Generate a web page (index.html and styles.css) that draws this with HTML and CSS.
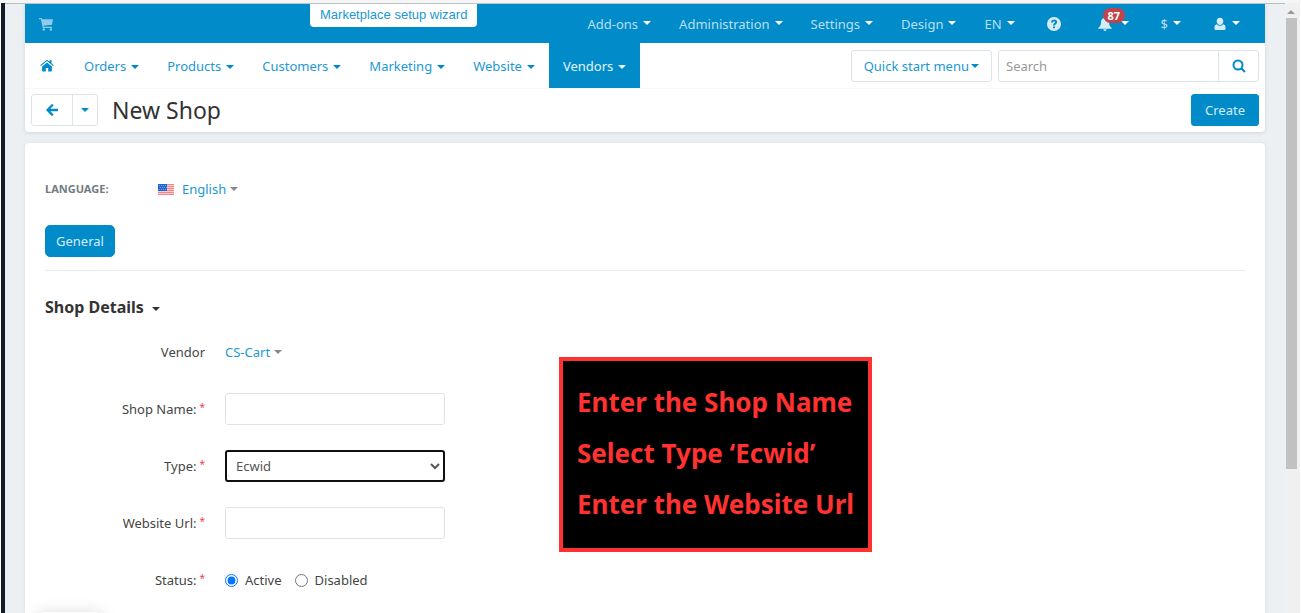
FILE: index.html
```
<!DOCTYPE html>
<html lang="en">
<head>
<meta charset="utf-8">
<title>New Shop</title>
<meta name="viewport" content="width=device-width, initial-scale=1">
<link rel="stylesheet" href="styles.css">
</head>
<body>
<div class="window">
<div class="edge"></div>
<main class="page">

<header class="header">
	<div class="topbar">
		<a class="top-link" href="#" aria-label="Storefront"><svg class="icon" viewBox="0 0 14 14"><path d="M0 1h2.800l.3 1.200H14l-1 5.600-8.600 1 .2 1H13v1.100H3.700L2 2.200H0z"/><circle cx="4.800" cy="12.500" r="1.200"/><circle cx="11.900" cy="12.500" r="1.200"/></svg></a>
		<a class="wizard" href="#">Marketplace setup wizard</a>
		<nav class="top-menu">
			<a class="top-link" href="#">Add-ons<i class="caret"></i></a>
			<a class="top-link" href="#">Administration<i class="caret"></i></a>
			<a class="top-link" href="#">Settings<i class="caret"></i></a>
			<a class="top-link" href="#">Design<i class="caret"></i></a>
			<a class="top-link" href="#">EN<i class="caret"></i></a>
			<a class="top-link help" href="#" aria-label="Help"><svg class="icon" viewBox="0 0 14 14"><circle cx="7" cy="7" r="7"/><path class="cut" d="M4 5.400C4.100 3.500 5.300 2.500 7.100 2.500c1.700 0 3.100 1 3.100 2.600 0 2-2.200 2.100-2.200 3.500H6c0-2.200 2-2.500 2-3.500 0-.5-.4-.8-.9-.8-.6 0-1 .4-1.100 1.200zM6 9.400h2v1.900H6z"/></svg></a>
			<a class="top-link" href="#" aria-label="Notifications"><span class="bell"><svg class="icon" viewBox="0 0 14 14"><path d="M7 0c.6 0 .9.400.9.900C10 1.300 11 3 11 5c0 3.500 1.100 4.600 2.700 6v.8H.300V11C1.900 9.600 3 8.500 3 5c0-2 1-3.700 3.100-4.100C6.100.4 6.400 0 7 0zM5.300 12.300h3.400C8.600 13.300 8 14 7 14s-1.600-.7-1.700-1.700z"/></svg><b class="badge">87</b></span><i class="caret"></i></a>
			<a class="top-link" href="#">$<i class="caret"></i></a>
			<a class="top-link" href="#" aria-label="Account"><svg class="icon" viewBox="0 0 14 14"><path d="M7 .8c2 0 3.300 1.500 3.300 3.500S9 8 7 8 3.700 6.300 3.700 4.300 5 .8 7 .8zM3.900 7.200C4.800 8.300 5.800 8.800 7 8.800s2.200-.5 3.100-1.600c1.800.3 2.500 1.900 2.500 4 0 1.200-.7 1.900-1.800 1.900H3.200c-1.100 0-1.800-.7-1.800-1.900 0-2.100.7-3.700 2.500-4z"/></svg><i class="caret"></i></a>
		</nav>
	</div>

	<div class="navbar">
		<nav class="menu">
			<a class="menu-link home" href="#" aria-label="Home"><svg class="icon" viewBox="0 0 14 14"><path d="M7 3.400l4.900 4v4.400c0 .4-.2.600-.6.600H8.200V8.900H5.800v3.500H2.700c-.4 0-.6-.2-.6-.6V7.400zM6.300 1.200c.4-.3 1-.3 1.400 0L9.500 2.700V1.300h2.100v3.100l2.200 1.900-.7.800L7 2.100.9 7.100l-.7-.8z"/></svg></a>
			<a class="menu-link" href="#">Orders<i class="caret"></i></a>
			<a class="menu-link" href="#">Products<i class="caret"></i></a>
			<a class="menu-link" href="#">Customers<i class="caret"></i></a>
			<a class="menu-link" href="#">Marketing<i class="caret"></i></a>
			<a class="menu-link" href="#">Website<i class="caret"></i></a>
			<a class="menu-link active" href="#">Vendors<i class="caret"></i></a>
		</nav>
		<button class="btn quick" type="button">Quick start menu<i class="caret"></i></button>
		<form class="search" role="search">
			<input type="text" placeholder="Search" aria-label="Search">
			<button type="button" aria-label="Find"><svg class="icon" viewBox="0 0 14 14"><circle class="lens" cx="6" cy="6" r="4.500"/><path class="lens" d="M9.200 9.200L13 13"/></svg></button>
		</form>
	</div>

	<div class="titlebar">
		<div class="back">
			<button type="button" aria-label="Back"><svg class="icon" viewBox="0 0 14 14"><path d="M7.500 1.200l1.100 1.100L5.400 5.700H13v2.500H5.400l3.200 3.400-1.100 1.100L6.800 13 1 7l5.800-6z"/></svg></button>
			<button type="button" aria-label="Recent pages"><i class="caret"></i></button>
		</div>
		<h1>New Shop</h1>
		<button class="btn primary" type="button">Create</button>
	</div>
</header>

<section class="panel">
	<div class="language">
		<span class="language-label">Language:</span>
		<svg class="flag" viewBox="0 0 16 11"><path fill="#f9cdcd" d="M0 0h16v11H0z"/><path fill="#f2858a" d="M0 0h16v1H0zM0 2h16v1H0zM0 4h16v1H0zM0 6h16v1H0zM0 8h16v1H0zM0 10h16v1H0z"/><path fill="#2267d0" d="M0 0h9v7H0z"/><path stroke="#8fb8f0" stroke-width=".7" stroke-dasharray="1 1" d="M1 1.500h8M2 3.500h7M1 5.500h8"/></svg>
		<a class="drop" href="#">English<i class="caret"></i></a>
	</div>
	<button class="btn primary tab" type="button">General</button>
	<hr>
	<h2>Shop Details<i class="caret"></i></h2>

	<form class="details">
		<div class="row">
			<span class="label">Vendor</span>
			<a class="drop" href="#">CS-Cart<i class="caret"></i></a>
		</div>
		<div class="row">
			<label class="label required" for="shop_name">Shop Name:</label>
			<input class="field" id="shop_name" type="text">
		</div>
		<div class="row">
			<label class="label required" for="shop_type">Type:</label>
			<select class="field focused" id="shop_type">
				<option>Ecwid</option>
			</select>
		</div>
		<div class="row">
			<label class="label required" for="shop_url">Website Url:</label>
			<input class="field" id="shop_url" type="text">
		</div>
		<div class="row">
			<span class="label required">Status:</span>
			<label class="radio"><input type="radio" name="status" checked>Active</label>
			<label class="radio"><input type="radio" name="status">Disabled</label>
		</div>
	</form>

	<div class="callout">
		<p>Enter the Shop Name</p>
		<p>Select Type ‘Ecwid’</p>
		<p>Enter the Website Url</p>
	</div>
</section>
</main>
<div class="scrollbar"><div class="scroll-up"></div><div class="thumb"></div></div>
<div class="status-tip"></div>
</div>
</body>
</html>
```
FILE: styles.css
```
* { box-sizing: border-box; }

body {
	margin: 0;
	background: #ecf0f3;
	color: #444;
	font: 13px/20px "Noto Sans", sans-serif;
}

a { color: #1b98d5; text-decoration: none; }
button, input, select { font: inherit; color: inherit; }
button { cursor: pointer; }
h1, h2, p { margin: 0; }

.window {
	position: relative;
	display: flex;
	height: 100vh;
	overflow: hidden;
	border-top: 3px solid #f5f5f5;
}
.edge {
	width: 5px;
	background: #111d28;
	border-left: 1px solid #fff;
}
.page {
	flex: 1;
	padding: 0 20px;
	border-top: 1px solid #b5bdc2;
}

.icon {
	width: 14px;
	height: 14px;
	fill: currentColor;
}
.caret {
	display: inline-block;
	border: 4px solid transparent;
	border-top-color: currentColor;
	border-bottom: 0;
}

/* header */
.header {
	background: #fff;
	border-radius: 0 0 4px 4px;
	box-shadow: 0 1px 4px #d0d5d8;
}
.topbar {
	position: relative;
	display: flex;
	justify-content: space-between;
	height: 39px;
	padding-right: 9px;
	background: #018bc9;
}
.top-menu, .menu { display: flex; }
.top-link, .menu-link {
	display: flex;
	align-items: center;
	gap: 5px;
	padding: 0 14px;
}
.top-link { color: #b9dff2; }
.top-link .icon { fill: #d5ecf7; }
.topbar > .top-link .icon { fill: #8dccec; }
.top-link .caret { color: #fff; margin-bottom: 2px; }
.top-link .cut { fill: #018bc9; }
.help { padding: 0 21px 0 18px; }
.help ~ .top-link { padding: 0 16px; }
.wizard {
	position: absolute;
	left: 285px;
	top: 0;
	height: 23px;
	padding: 1px 10px;
	background: #fff;
	border-radius: 0 0 4px 4px;
	font-family: "Liberation Sans", sans-serif;
}
.bell { position: relative; height: 14px; margin-right: 4px; }
.bell .icon { display: block; }
.badge {
	position: absolute;
	left: 5px;
	top: -9px;
	padding: 0 5px;
	border-radius: 8px;
	background: #c0444c;
	color: #fff;
	font-size: 11px;
	line-height: 15px;
}

.navbar {
	display: flex;
	align-items: center;
	gap: 6px;
	height: 46px;
	padding-right: 6px;
	border-bottom: 1px solid #f6f8f9;
}
.menu { flex: 1; align-self: stretch; padding-left: 1px; }
.menu-link { color: #1b98d5; }
.home { padding-right: 16px; }
.menu-link .icon, .menu-link .caret { color: #018bc9; }
.menu-link .caret { margin-top: 2px; }
.active { background: #018bc9; }
.menu-link.active, .active .caret { color: #e4f3fa; }

.btn {
	height: 32px;
	padding: 0 13px;
	border: 1px solid #dce4ea;
	border-radius: 3px;
	background: #fff;
	color: #1b98d5;
}
.primary {
	border-color: #018bc9;
	background: #018bc9;
	color: #d5edf8;
}
.quick { padding: 0 12px; }
.quick .caret { margin: 0 0 3px 2px; color: #018bc9; }

.search, .back {
	display: flex;
	height: 32px;
	border: 1px solid #dce4ea;
	border-radius: 3px;
}
.search input {
	width: 219px;
	padding: 0 7px;
	border: 0;
	background: none;
}
.search input::placeholder { color: #999; }
.search button, .back button {
	display: flex;
	align-items: center;
	justify-content: center;
	width: 40px;
	padding: 0;
	border: 0;
	background: none;
	color: #018bc9;
}
.search button, .back button + button { border-left: 1px solid #dce4ea; }
.back button + button { width: 25px; }
.lens { fill: none; stroke: currentColor; stroke-width: 2; }

.titlebar {
	display: flex;
	align-items: center;
	gap: 14px;
	height: 43px;
	padding: 0 6px 1px;
}
.titlebar h1 {
	flex: 1;
	color: #333;
	font-size: 23px;
	font-weight: 400;
}

/* content */
.panel {
	position: relative;
	min-height: 100%;
	margin-top: 11px;
	padding: 36px 20px;
	background: #fff;
	border-radius: 4px;
	box-shadow: 0 0 4px #d9dfe2;
}
.language { display: flex; align-items: center; }
.language-label {
	width: 113px;
	color: #737b82;
	font-size: 11px;
	font-weight: 700;
	text-transform: uppercase;
}
.flag { width: 16px; height: 11px; margin-right: 8px; }
.drop .caret { margin: 0 0 3px 4px; color: #888; }
.tab { display: block; margin-top: 26px; padding: 0 10px; border-radius: 5px; }
hr {
	margin: 13px 0 26px;
	border: 0;
	border-top: 1px solid #e6ecf0;
}
h2 { color: #333; font-size: 16px; }
h2 .caret { margin: 0 0 2px 8px; }

.details { display: grid; gap: 25px; margin-top: 19px; }
.row { display: flex; align-items: center; height: 32px; }
.label { width: 160px; margin-right: 20px; text-align: right; }
.required::after {
	content: "*";
	margin-left: 3px;
	color: #f33b50;
	font-size: 10px;
	line-height: 10px;
	vertical-align: 3px;
}
.field {
	width: 220px;
	height: 32px;
	padding: 0 5px;
	border: 1px solid #dce4ea;
	border-radius: 3px;
	background: #fff;
	color: #555;
}
.focused { border: 2px solid #101010; }
.radio { display: flex; align-items: center; gap: 7px; margin-right: 13px; }
.radio input { margin: 0; width: 13px; height: 13px; }

.callout {
	position: absolute;
	left: 534px;
	top: 214px;
	padding: 16px 14px 18px;
	border: 4px solid #ff3131;
	background: #000;
	color: #ff3131;
	font: 700 26px/51px "Noto Sans", sans-serif;
}

/* window chrome */
.scrollbar {
	display: flex;
	flex-direction: column;
	align-items: flex-start;
	width: 16px;
	padding-left: 1px;
	background: #f0f0f0;
	border-right: 1px solid #fff;
}
.scroll-up {
	margin: 7px 0 4px 1px;
	border: 4px solid transparent;
	border-top: 0;
	border-bottom-color: #999;
}
.thumb { width: 11px; height: 451px; background: #c1c1c1; }
.status-tip {
	position: absolute;
	left: 37px;
	bottom: -19px;
	width: 66px;
	height: 20px;
	border-radius: 8px;
	background: #fff;
	box-shadow: 0 0 16px #ddd;
}
```
